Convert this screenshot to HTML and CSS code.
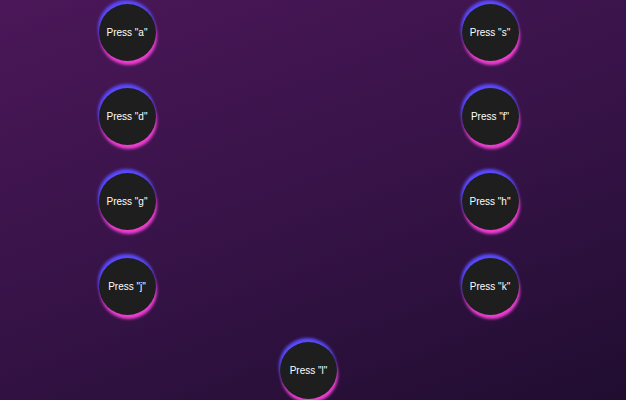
FILE: index.html
```html
<!DOCTYPE html>
<html lang="en">
<head>
<meta charset="utf-8">
<title>Keys</title>
<link rel="stylesheet" href="styles.css">
</head>
<body>
<main class="pad">
  <div class="key">Press "a"</div>
  <div class="key col-3">Press "s"</div>
  <div class="key">Press "d"</div>
  <div class="key col-3">Press "f"</div>
  <div class="key">Press "g"</div>
  <div class="key col-3">Press "h"</div>
  <div class="key">Press "j"</div>
  <div class="key col-3">Press "k"</div>
  <div class="key col-2">Press "l"</div>
</main>
</body>
</html>
```
FILE: styles.css
```css
html, body {
  margin: 0;
  height: 100%;
}
body {
  background: linear-gradient(160deg, #4b1758 0%, #371348 50%, #200d30 100%);
  font-family: "Liberation Sans", Arial, sans-serif;
  overflow: hidden;
}
.pad {
  display: grid;
  grid-template-columns: 57px 57px 57px;
  grid-auto-rows: 57px;
  column-gap: 124.5px;
  row-gap: 27.7px;
  padding: 3.5px 0 0 98.5px;
}
.key {
  grid-column: 1;
  width: 57px;
  height: 57px;
  border-radius: 50%;
  background: #1e1e1e;
  color: #fff;
  font-size: 10px;
  display: flex;
  align-items: center;
  justify-content: center;
  white-space: nowrap;
  box-shadow: -1px -4px 3px #5a4bff, 1px 4px 3px #f03ed2;
}
.col-3 { grid-column: 3; }
.col-2 { grid-column: 2; }
```
